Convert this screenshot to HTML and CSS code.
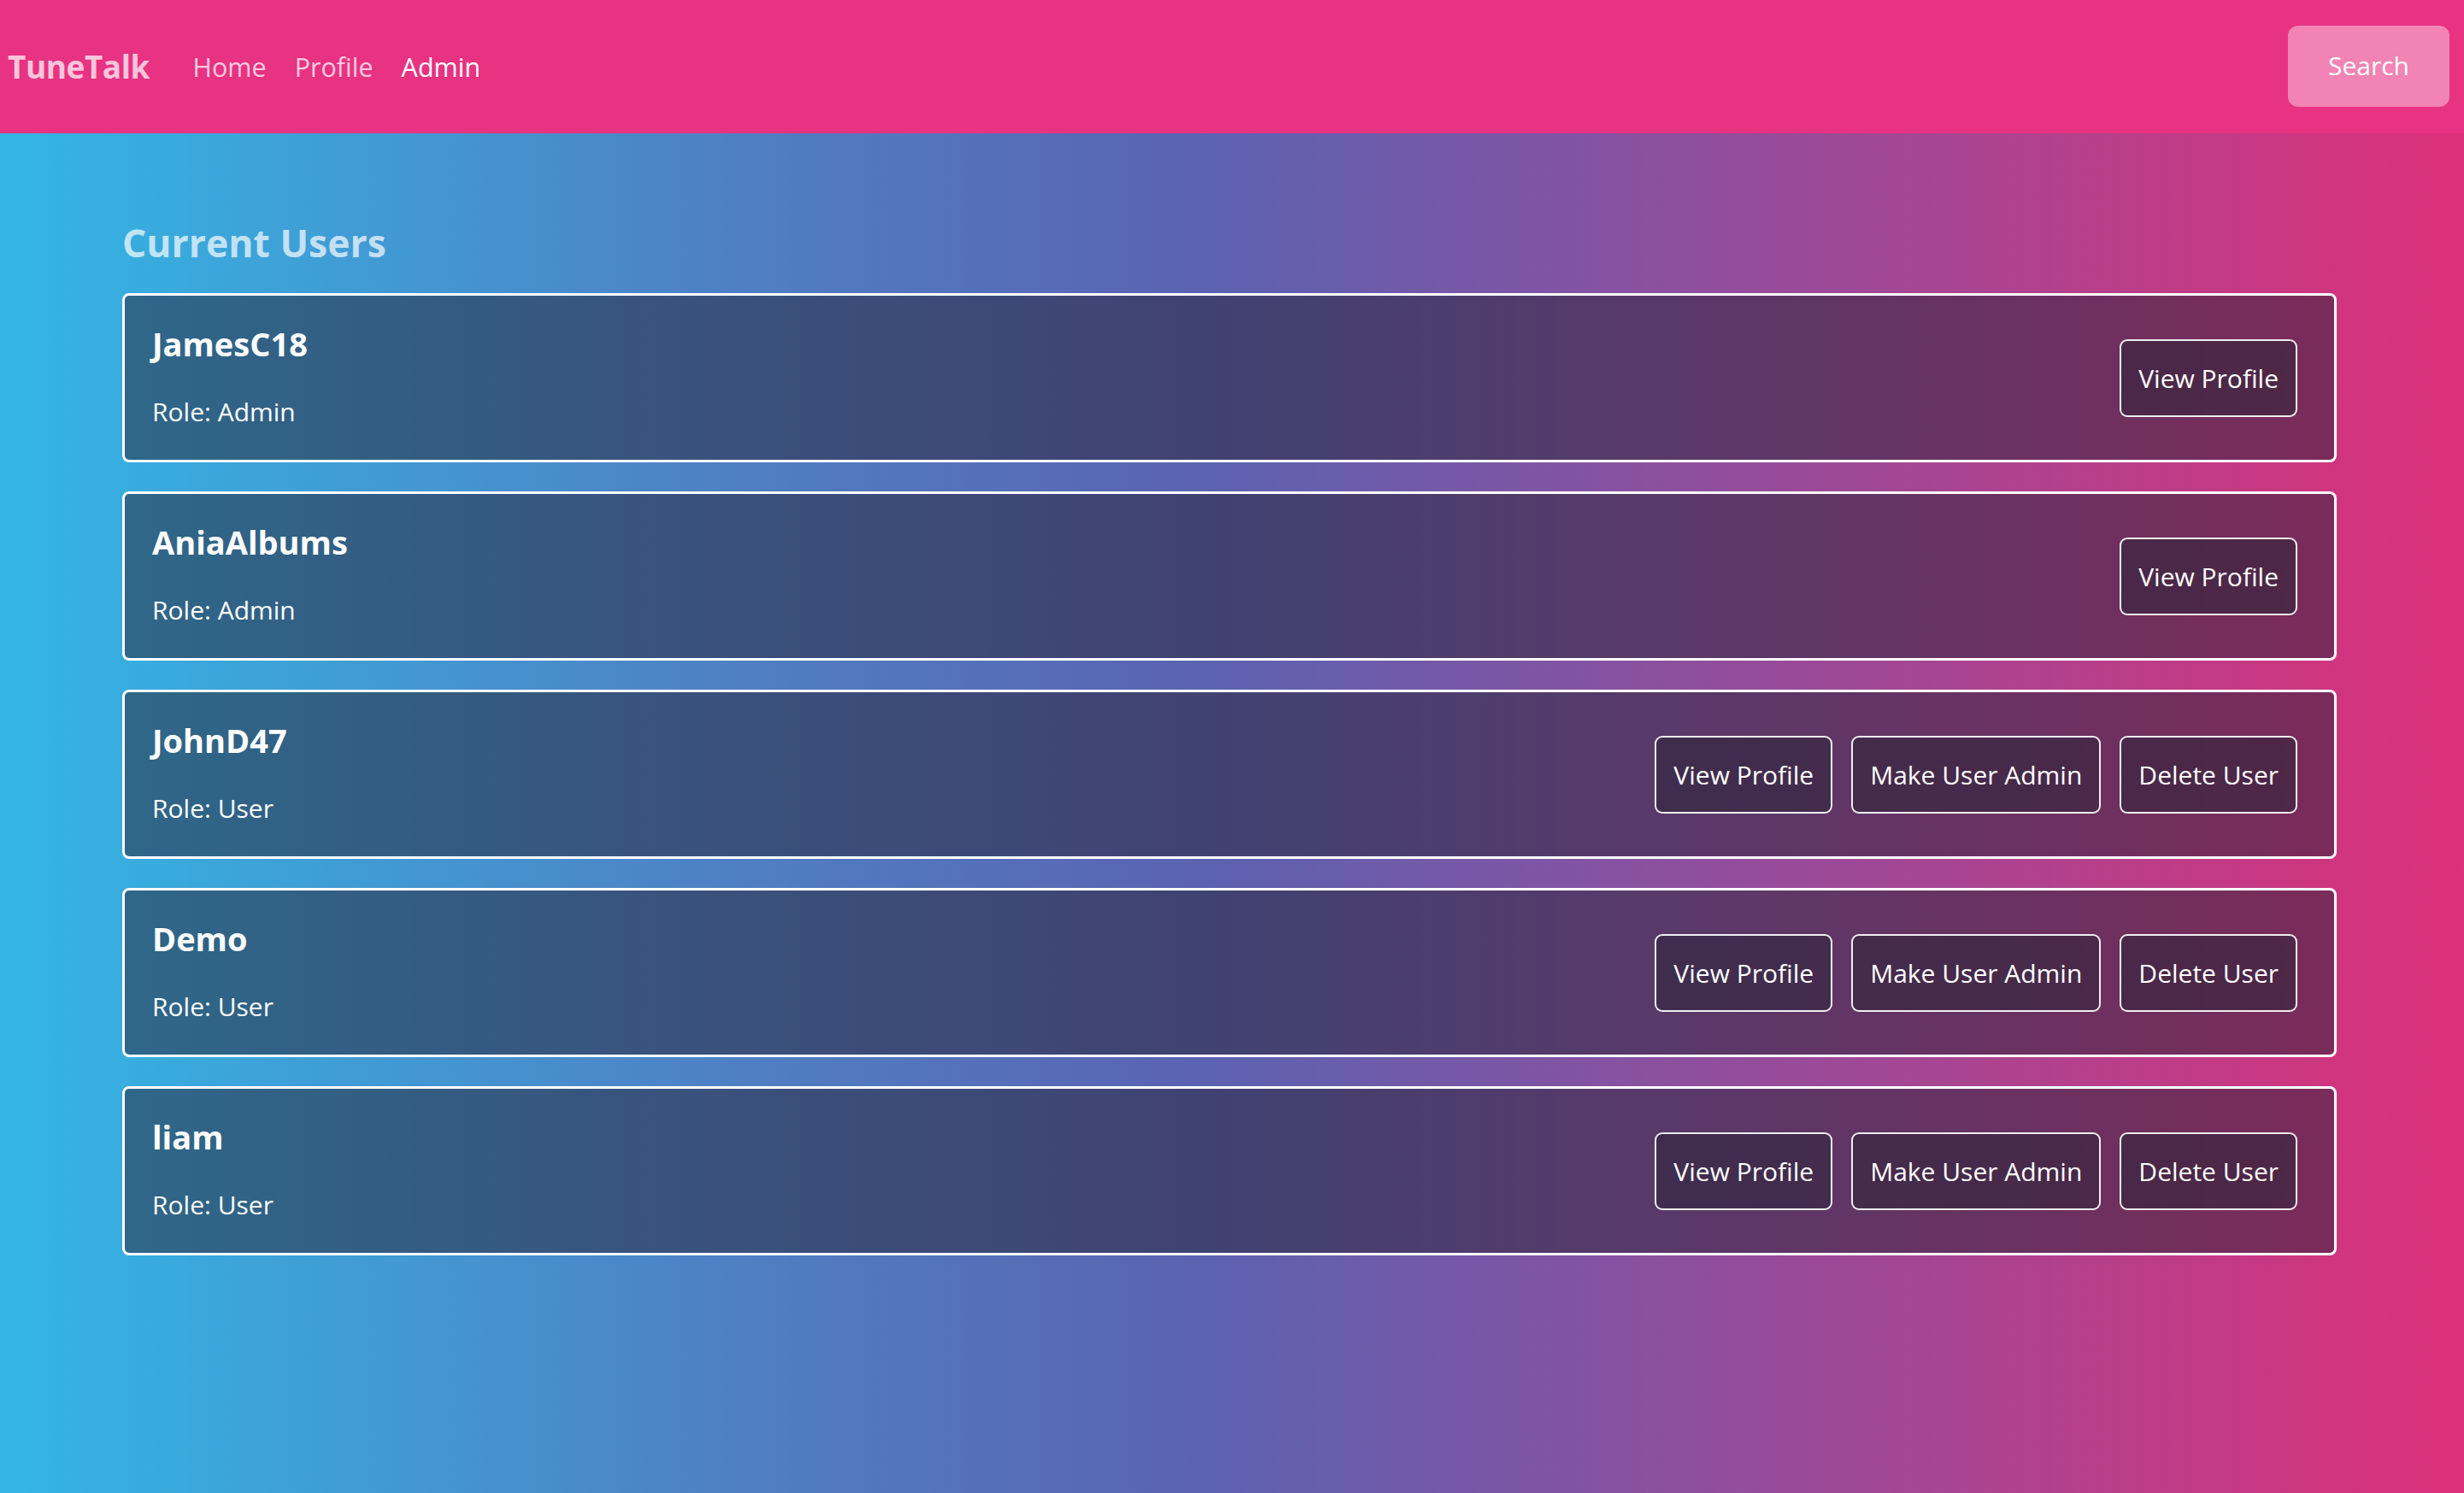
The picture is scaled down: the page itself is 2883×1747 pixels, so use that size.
FILE: index.html
```html
<!DOCTYPE html>
<html lang="en">
<head>
<meta charset="utf-8">
<title>TuneTalk - Admin</title>
<link rel="stylesheet" href="styles.css">
</head>
<body>
<nav class="navbar">
  <a class="brand" href="#">TuneTalk</a>
  <div class="nav-links">
    <a class="nav-link" href="#">Home</a>
    <a class="nav-link" href="#">Profile</a>
    <a class="nav-link active" href="#">Admin</a>
  </div>
  <button class="search-btn" type="button">Search</button>
</nav>
<main class="page">
  <h2 class="title">Current Users</h2>
  <div class="user-card">
    <div class="user-info">
      <h5 class="user-name">JamesC18</h5>
      <p class="user-role">Role: Admin</p>
    </div>
    <div class="actions">
      <button class="btn" type="button">View Profile</button>
    </div>
  </div>
  <div class="user-card">
    <div class="user-info">
      <h5 class="user-name">AniaAlbums</h5>
      <p class="user-role">Role: Admin</p>
    </div>
    <div class="actions">
      <button class="btn" type="button">View Profile</button>
    </div>
  </div>
  <div class="user-card">
    <div class="user-info">
      <h5 class="user-name">JohnD47</h5>
      <p class="user-role">Role: User</p>
    </div>
    <div class="actions">
      <button class="btn" type="button">View Profile</button>
      <button class="btn" type="button">Make User Admin</button>
      <button class="btn" type="button">Delete User</button>
    </div>
  </div>
  <div class="user-card">
    <div class="user-info">
      <h5 class="user-name">Demo</h5>
      <p class="user-role">Role: User</p>
    </div>
    <div class="actions">
      <button class="btn" type="button">View Profile</button>
      <button class="btn" type="button">Make User Admin</button>
      <button class="btn" type="button">Delete User</button>
    </div>
  </div>
  <div class="user-card">
    <div class="user-info">
      <h5 class="user-name">liam</h5>
      <p class="user-role">Role: User</p>
    </div>
    <div class="actions">
      <button class="btn" type="button">View Profile</button>
      <button class="btn" type="button">Make User Admin</button>
      <button class="btn" type="button">Delete User</button>
    </div>
  </div>
</main>
</body>
</html>
```
FILE: styles.css
```css
html, body {
  margin: 0;
  padding: 0;
}

body {
  min-height: 100vh;
  font-family: "Open Sans", "Noto Sans", sans-serif;
  color: #fff;
  background: linear-gradient(90deg, #33b6e4 0%, #4f7fc4 30%, #5b62b0 49%, #8752a1 66%, #dc3079 100%);
  background-attachment: fixed;
}

.navbar {
  display: flex;
  align-items: center;
  background: #e83282;
  padding: 30px 17px 31px 9px;
}

.brand {
  font-size: 37px;
  font-weight: 700;
  line-height: 48px;
  color: rgba(255, 255, 255, 0.72);
  text-decoration: none;
  margin-right: 34px;
  letter-spacing: -0.5px;
}

.nav-links {
  display: flex;
}

.nav-link {
  font-size: 30.5px;
  line-height: 48px;
  padding: 0 16.5px;
  color: rgba(255, 255, 255, 0.75);
  text-decoration: none;
}

.nav-link.active {
  color: #fff;
}

.search-btn {
  margin-left: auto;
  font-family: inherit;
  font-size: 30px;
  line-height: 48px;
  color: #fff;
  background: rgba(255, 255, 255, 0.4);
  border: 0;
  border-radius: 12px;
  padding: 23px 47px 24px;
}

.page {
  padding: 101px 149px 60px 143px;
}

.title {
  margin: 0 0 32px;
  font-size: 44.5px;
  line-height: 54px;
  font-weight: 700;
  color: rgba(255, 255, 255, 0.7);
}

.user-card {
  display: flex;
  align-items: center;
  justify-content: space-between;
  border: 3px solid #fff;
  border-radius: 8px;
  background: rgba(38, 33, 52, 0.5);
  padding: 32px 43px 32px 32px;
  margin-bottom: 34px;
}

.user-name {
  margin: 0 0 32px;
  font-size: 38px;
  line-height: 48px;
  font-weight: 700;
}

.user-role {
  margin: 0;
  font-size: 30px;
  line-height: 48px;
}

.actions {
  display: flex;
  gap: 22px;
}

.btn {
  font-family: inherit;
  font-size: 30px;
  line-height: 49px;
  color: #fff;
  background: rgba(38, 33, 52, 0.5);
  border: 2px solid rgba(255, 255, 255, 0.92);
  border-radius: 9px;
  padding: 19px 20px;
}
```
